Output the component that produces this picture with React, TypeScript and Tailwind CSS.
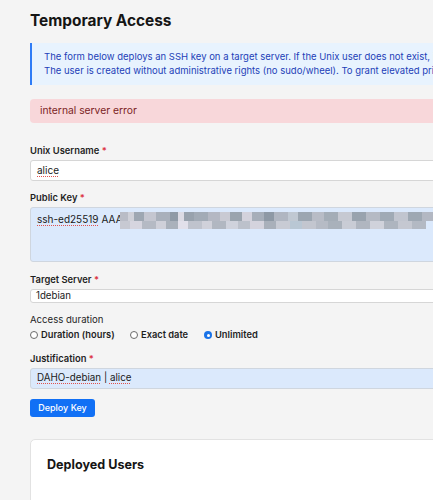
import React from "react";

const blocks: [number, number, number, number, string][] = [
  [0, 0, 8, 9, "#b9bcc6"], [8, 0, 6, 9, "#cfd0d8"], [14, 0, 10, 9, "#9ea7b2"], [24, 0, 12, 9, "#c4c6d0"],
  [36, 0, 14, 9, "#a9b0bb"], [50, 0, 8, 9, "#8f9aa6"], [58, 0, 6, 9, "#dcdbe4"], [64, 0, 10, 9, "#98a2ad"],
  [74, 0, 14, 9, "#a2abb6"], [88, 0, 12, 9, "#b4b8c3"], [100, 0, 10, 9, "#c9cad3"], [110, 0, 12, 9, "#9aa4ae"],
  [122, 0, 10, 9, "#d3d2dc"], [132, 0, 12, 9, "#a6aeb9"], [144, 0, 10, 9, "#8e99a5"], [154, 0, 14, 9, "#b0b6c1"],
  [168, 0, 10, 9, "#c0c8d2"], [178, 0, 14, 9, "#9ca6b1"], [192, 0, 12, 9, "#b8bcc6"], [204, 0, 14, 9, "#a4adb7"],
  [218, 0, 14, 9, "#c6c9d2"], [232, 0, 14, 9, "#99a3ae"], [246, 0, 14, 9, "#b5bac4"], [260, 0, 14, 9, "#a0aab5"],
  [274, 0, 14, 9, "#c1c5cf"], [288, 0, 14, 9, "#9ea8b3"], [302, 0, 14, 9, "#b3b8c3"],
  [0, 9, 10, 8, "#c7c9d2"], [10, 9, 12, 8, "#d6d5df"], [22, 9, 14, 8, "#b5bac4"], [36, 9, 10, 8, "#cfd0d9"],
  [46, 9, 12, 8, "#aab1bb"], [58, 9, 10, 8, "#e2e0ea"], [68, 9, 14, 8, "#bfc3cd"], [82, 9, 10, 8, "#d0d1da"],
  [92, 9, 14, 8, "#b1b7c1"], [106, 9, 12, 8, "#cfd2dc"], [118, 9, 12, 8, "#bcc1cb"], [130, 9, 14, 8, "#d4d3dd"],
  [144, 9, 12, 8, "#a9b0ba"], [156, 9, 14, 8, "#c8cbd4"], [170, 9, 12, 8, "#b9c7d4"], [182, 9, 14, 8, "#c3c6cf"],
  [196, 9, 12, 8, "#b6bbc5"], [208, 9, 14, 8, "#a9b1bb"], [222, 9, 14, 8, "#c9ccd5"], [236, 9, 14, 8, "#b0b6c0"],
  [250, 9, 14, 8, "#d0d2db"], [264, 9, 14, 8, "#aeb5bf"], [278, 9, 14, 8, "#c5c8d1"], [292, 9, 14, 8, "#b3b9c3"],
];

function Label({ children, required }: { children: React.ReactNode; required?: boolean }) {
  return (
    <div className="text-[9.4px] leading-[14px] font-semibold text-[#1f1f1f]">
      {children}
      {required && <span className="text-[#dc3545]"> *</span>}
    </div>
  );
}

function Radio({ checked, label }: { checked?: boolean; label: string }) {
  return (
    <div className="flex items-center gap-[3px]">
      {checked ? (
        <span className="w-[8px] h-[8px] rounded-full bg-[#1a73e8] flex items-center justify-center">
          <span className="w-[3px] h-[3px] rounded-full bg-white" />
        </span>
      ) : (
        <span className="w-[8px] h-[8px] rounded-full border border-[#6b6b6b] bg-white" />
      )}
      <span className="text-[9.3px] leading-[14px] font-semibold text-[#1f1f1f]">{label}</span>
    </div>
  );
}

const spell = "underline decoration-dotted decoration-[#e0524f] underline-offset-[2px]";

export default function App() {
  return (
    <div className="w-[433px] h-[500px] overflow-hidden bg-[#f4f4f4] font-['Inter',sans-serif]">
      <div className="w-[900px] pl-[30px] pt-[10px] flex flex-col">
        <h1 className="text-[15.4px] leading-[22px] font-bold text-[#151515]">Temporary Access</h1>
        <div className="mt-[11px] h-[42px] border-l-2 border-[#2f7cf6] bg-[#e8f3fe] pl-[12px] pt-[7px] text-[9.5px] leading-[14px] text-[#1d3fb8]">
          <div>The form below deploys an SSH key on a target server. If the Unix user does not exist, it will be created automatically.</div>
          <div>The user is created without administrative rights (no sudo/wheel). To grant elevated privileges, contact an administrator.</div>
        </div>
        <div className="mt-[14px] h-[24px] rounded-[4px] bg-[#f8d7da] pl-[10px] flex items-center text-[10.3px] text-[#7c1f25]">
          internal server error
        </div>

        <div className="mt-[21px]">
          <Label required>Unix Username</Label>
        </div>
        <div className="mt-[2px] h-[21px] rounded-[3px] border border-[#d6d6d6] bg-white pl-[6px] flex items-center text-[10px] text-[#1a1a1a]">
          <span className={spell}>alice</span>
        </div>

        <div className="mt-[10px]">
          <Label required>Public Key</Label>
        </div>
        <div className="mt-[2px] h-[55px] rounded-[3px] border border-[#cfd6df] bg-[#dbe9fc] pl-[6px] pt-[4px] text-[10px] leading-[14px] text-[#1a1a1a] flex items-start">
          <span className={spell}>ssh-ed25519</span>
          <span className="ml-[3px]">AAA</span>
          <svg width="330" height="17" className="-ml-[3px]" viewBox="0 0 330 17">
            {blocks.map(([x, y, w, h, c], i) => (
              <rect key={i} x={x} y={y} width={w} height={h} fill={c} />
            ))}
          </svg>
        </div>

        <div className="mt-[11px]">
          <Label required>Target Server</Label>
        </div>
        <div className="mt-[2px] h-[14px] rounded-[3px] border border-[#d6d6d6] bg-white pl-[5px] flex items-center text-[9.7px] text-[#1a1a1a]">
          1debian
        </div>

        <div className="mt-[10px] text-[9.6px] leading-[14px] text-[#1f1f1f]">Access duration</div>
        <div className="mt-[1px] flex items-center">
          <div className="w-[100px]"><Radio label="Duration (hours)" /></div>
          <div className="w-[74px]"><Radio label="Exact date" /></div>
          <Radio checked label="Unlimited" />
        </div>

        <div className="mt-[10px]">
          <Label required>Justification</Label>
        </div>
        <div className="mt-[2px] h-[21px] rounded-[3px] border border-[#cfd6df] bg-[#dbe9fc] pl-[6px] flex items-center text-[9.8px] text-[#1a1a1a]">
          <span className={spell}>DAHO-debian</span>
          <span className="whitespace-pre"> | </span>
          <span className={spell}>alice</span>
        </div>

        <div className="mt-[10px]">
          <button className="h-[18px] w-[65px] rounded-[3px] bg-[#1170f5] text-white text-[9px] font-medium flex items-center justify-center">
            Deploy Key
          </button>
        </div>

        <div className="mt-[22px] h-[120px] rounded-[5px] border border-[#e2e2e2] bg-white pl-[16px] pt-[16px]">
          <h2 className="text-[12.6px] leading-[18px] font-bold text-[#151515]">Deployed Users</h2>
        </div>
      </div>
    </div>
  );
}
